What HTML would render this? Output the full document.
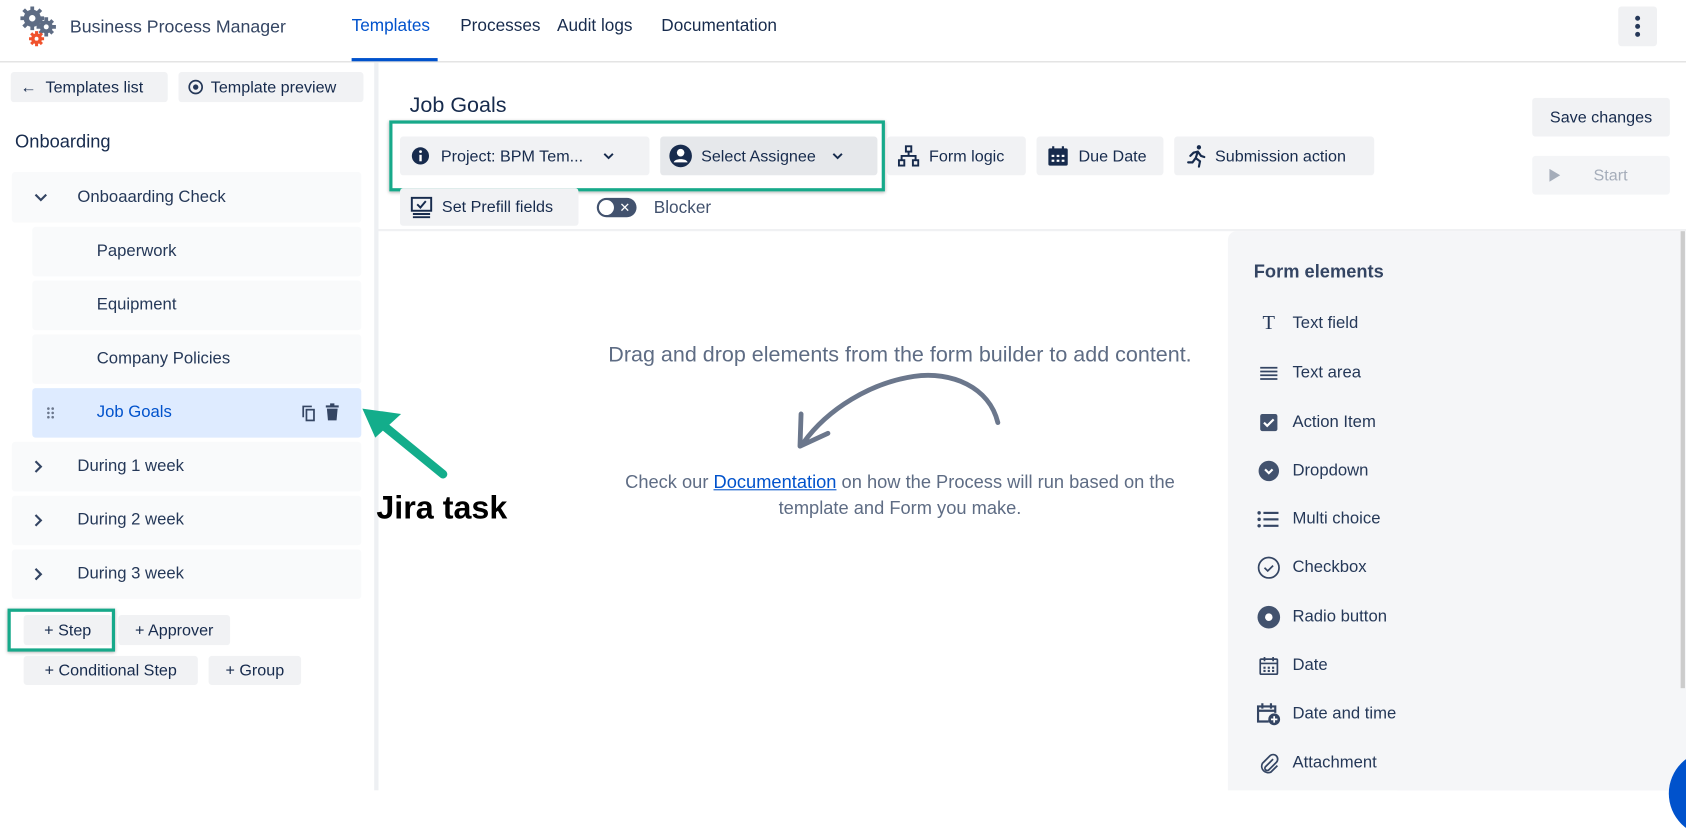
<!DOCTYPE html>
<html><head><meta charset="utf-8"><style>
html,body{margin:0;padding:0;width:1686px;height:790px;overflow:hidden;background:#fff}
#w{position:absolute;left:0;top:0;width:1568px;height:735px;transform:scale(1.07526);transform-origin:0 0;font-family:"Liberation Sans",sans-serif;color:#172b4d}
.a{position:absolute}
.btn{position:absolute;background:#f1f2f4;border-radius:3px;font-size:15px;color:#172b4d;display:flex;align-items:center;box-sizing:border-box;white-space:nowrap}
.row{position:absolute;background:#f9fafb;border-radius:3px;font-size:15.5px;color:#253858;display:flex;align-items:center}
.fe{position:absolute;left:1166px;font-size:15.5px;color:#253858;display:flex;align-items:center;height:24px}
.fe .ic{width:28px;display:flex;justify-content:center;margin-right:8px}
</style></head><body><div id="w">
<!-- header -->
<div class="a" style="left:0;top:57px;width:1568px;height:1px;background:#d9d9d9"></div>
<svg class="a" style="left:18px;top:5px" width="40" height="40" viewBox="0 0 40 40">
<g fill="#5e6c84"><circle cx="12" cy="12" r="8"/><circle cx="25" cy="20" r="6"/></g>
<g stroke="#5e6c84" stroke-width="3.5"><path d="M12 1v22M1 12h22M4 4l16 16M20 4L4 20"/><path d="M25 11v18M16 20h18M19 14l12 12M31 14L19 26"/></g>
<circle cx="12" cy="12" r="3" fill="#fff"/><circle cx="25" cy="20" r="2.3" fill="#fff"/>
<g fill="#f0522d"><circle cx="16" cy="31" r="5"/></g><g stroke="#f0522d" stroke-width="2.8"><path d="M16 24v14M9 31h14M11 26l10 10M21 26l-10 10"/></g><circle cx="16" cy="31" r="1.8" fill="#fff"/>
</svg>
<div class="a" style="left:65px;top:16px;font-size:16.5px;color:#344563">Business Process Manager</div>
<div class="a" style="left:327px;top:16px;font-size:16px;color:#0052cc">Templates</div>
<div class="a" style="left:327px;top:54px;width:80px;height:3px;background:#0052cc"></div>
<div class="a" style="left:428px;top:16px;font-size:16px;color:#172b4d">Processes</div>
<div class="a" style="left:518px;top:16px;font-size:16px;color:#172b4d">Audit logs</div>
<div class="a" style="left:615px;top:16px;font-size:16px;color:#172b4d">Documentation</div>
<div class="a" style="left:1505px;top:6px;width:36px;height:37px;background:#f0f1f3;border-radius:3px"><svg width="36" height="37"><g fill="#253858"><circle cx="18" cy="11" r="2.3"/><circle cx="18" cy="18.5" r="2.3"/><circle cx="18" cy="26" r="2.3"/></g></svg></div>
<!-- sidebar -->
<div class="a" style="left:348px;top:58px;width:4px;height:677px;background:#eef0f3"></div>
<div class="btn" style="left:10px;top:67px;width:146px;height:28px;padding-left:9px">← &nbsp;Templates list</div>
<div class="btn" style="left:166px;top:67px;width:172px;height:28px;padding-left:8px"><svg width="16" height="16" style="margin-right:6px"><circle cx="8" cy="8" r="6" fill="none" stroke="#253858" stroke-width="1.6"/><circle cx="8" cy="8" r="2.5" fill="#253858"/></svg>Template preview</div>
<div class="a" style="left:14px;top:122px;font-size:17px;color:#172b4d">Onboarding</div>
<div class="row" style="left:11px;top:160px;width:325px;height:47px"><svg style="margin-left:20px" width="14" height="10"><path d="M2 2l5 5 5-5" fill="none" stroke="#344563" stroke-width="2"/></svg><span style="margin-left:27px">Onboaarding Check</span></div>
<div class="row" style="left:30px;top:211px;width:306px;height:46px"><span style="margin-left:60px">Paperwork</span></div>
<div class="row" style="left:30px;top:261px;width:306px;height:46px"><span style="margin-left:60px">Equipment</span></div>
<div class="row" style="left:30px;top:311px;width:306px;height:46px"><span style="margin-left:60px">Company Policies</span></div>
<div class="row" style="left:30px;top:361px;width:306px;height:46px;background:#deebff;color:#0052cc"><svg style="margin-left:13px" width="8" height="12"><g fill="#6b778c"><circle cx="2" cy="2" r="1.2"/><circle cx="6" cy="2" r="1.2"/><circle cx="2" cy="6" r="1.2"/><circle cx="6" cy="6" r="1.2"/><circle cx="2" cy="10" r="1.2"/><circle cx="6" cy="10" r="1.2"/></g></svg><span style="margin-left:39px">Job Goals</span>
<svg class="a" style="left:249px;top:15px" width="16" height="17"><path d="M3 12V2h8" fill="none" stroke="#344563" stroke-width="1.6"/><rect x="6" y="5" width="7" height="10" fill="none" stroke="#344563" stroke-width="1.6"/></svg>
<svg class="a" style="left:271px;top:14px" width="16" height="17"><path d="M2 3h12M6 1h4" stroke="#344563" stroke-width="2"/><path d="M3 5h10l-1 11H4z" fill="#344563"/></svg></div>
<div class="row" style="left:11px;top:411px;width:325px;height:46px"><svg style="margin-left:20px" width="10" height="14"><path d="M2 2l5 5-5 5" fill="none" stroke="#344563" stroke-width="2"/></svg><span style="margin-left:31px">During 1 week</span></div>
<div class="row" style="left:11px;top:461px;width:325px;height:46px"><svg style="margin-left:20px" width="10" height="14"><path d="M2 2l5 5-5 5" fill="none" stroke="#344563" stroke-width="2"/></svg><span style="margin-left:31px">During 2 week</span></div>
<div class="row" style="left:11px;top:511px;width:325px;height:46px"><svg style="margin-left:20px" width="10" height="14"><path d="M2 2l5 5-5 5" fill="none" stroke="#344563" stroke-width="2"/></svg><span style="margin-left:31px">During 3 week</span></div>
<div class="btn" style="left:22px;top:572px;width:82px;height:28px;justify-content:center">+ Step</div>
<div class="btn" style="left:110px;top:572px;width:104px;height:28px;justify-content:center">+ Approver</div>
<div class="btn" style="left:22px;top:610px;width:162px;height:27px;justify-content:center">+ Conditional Step</div>
<div class="btn" style="left:194px;top:610px;width:86px;height:27px;justify-content:center">+ Group</div>
<div class="a" style="left:7px;top:566px;width:94px;height:34px;border:3px solid #17a98a;box-shadow:0 1px 3px rgba(0,0,0,.3)"></div>
<svg class="a" style="left:330px;top:375px" width="95" height="80"><path d="M82 66L22 17" stroke="#13ad8b" stroke-width="8" stroke-linecap="round"/><path d="M7 5l36 5-24 22z" fill="#13ad8b"/></svg>
<div class="a" style="left:350px;top:456px;font-size:30px;font-weight:bold;color:#000">Jira task</div>
<!-- main -->
<div class="a" style="left:381px;top:87px;font-size:20px;color:#172b4d">Job Goals</div>
<div class="btn" style="left:372px;top:127px;width:232px;height:36px;padding-left:10px"><svg width="18" height="18" style="margin-right:10px"><circle cx="9" cy="9" r="8" fill="#172b4d"/><rect x="8" y="8" width="2.2" height="6" fill="#fff"/><circle cx="9.1" cy="5" r="1.3" fill="#fff"/></svg>Project: BPM Tem...<svg width="12" height="8" style="margin-left:18px"><path d="M2 2l4 4 4-4" fill="none" stroke="#172b4d" stroke-width="1.8"/></svg></div>
<div class="btn" style="left:614px;top:127px;width:202px;height:36px;padding-left:8px;background:#e6e8eb"><svg width="22" height="22" style="margin-right:8px"><circle cx="11" cy="11" r="10.5" fill="#172b4d"/><circle cx="11" cy="8" r="3.5" fill="#fff"/><path d="M4.5 17c1-4 12-4 13 0z" fill="#fff"/></svg>Select Assignee<svg width="12" height="8" style="margin-left:14px"><path d="M2 2l4 4 4-4" fill="none" stroke="#172b4d" stroke-width="1.8"/></svg></div>
<div class="btn" style="left:825px;top:127px;width:129px;height:36px;padding-left:10px"><svg width="20" height="20" style="margin-right:9px" fill="none" stroke="#172b4d" stroke-width="1.8"><rect x="7.5" y="1" width="5" height="5"/><rect x="1" y="14" width="5" height="5"/><rect x="14" y="14" width="5" height="5"/><path d="M10 6v4M3.5 14v-4h13v4"/></svg>Form logic</div>
<div class="btn" style="left:964px;top:127px;width:118px;height:36px;padding-left:10px"><svg width="20" height="20" style="margin-right:9px"><rect x="1" y="3" width="18" height="16" rx="1.5" fill="#172b4d"/><path d="M5.5 1v4M14.5 1v4" stroke="#172b4d" stroke-width="2"/><g fill="#fff"><rect x="4" y="9" width="2.5" height="2"/><rect x="8.7" y="9" width="2.5" height="2"/><rect x="13.4" y="9" width="2.5" height="2"/><rect x="4" y="13.5" width="2.5" height="2"/><rect x="8.7" y="13.5" width="2.5" height="2"/><rect x="13.4" y="13.5" width="2.5" height="2"/></g></svg>Due Date</div>
<div class="btn" style="left:1092px;top:127px;width:186px;height:36px;padding-left:10px"><svg width="20" height="22" style="margin-right:8px" fill="none" stroke="#172b4d" stroke-width="2" stroke-linecap="round"><circle cx="13" cy="3" r="2" fill="#172b4d" stroke="none"/><path d="M8 8l4-1 3 4 3 1M12 7l-2 6 4 3-1 5M10 13l-3 4H3M8 8L5 11"/></svg>Submission action</div>
<div class="a" style="left:362px;top:112px;width:455px;height:60px;border:3px solid #17a98a;box-shadow:0 1px 3px rgba(0,0,0,.3)"></div>
<div class="btn" style="left:372px;top:175px;width:166px;height:35px;padding-left:9px"><svg width="22" height="22" style="margin-right:8px" fill="none" stroke="#172b4d" stroke-width="1.8"><rect x="2" y="2" width="18" height="12"/><path d="M7 8l3 3 5-6M3 17h16M3 20h16"/></svg>Set Prefill fields</div>
<div class="a" style="left:555px;top:184px;width:37px;height:18px;border-radius:9px;background:#42526e"><div class="a" style="left:2px;top:2px;width:14px;height:14px;border-radius:7px;background:#fff"></div><div class="a" style="left:21px;top:0px;font-size:12px;color:#fff;line-height:18px">✕</div></div>
<div class="a" style="left:608px;top:185px;font-size:16px;color:#42526e">Blocker</div>
<div class="btn" style="left:1425px;top:91px;width:128px;height:36px;justify-content:center">Save changes</div>
<div class="btn" style="left:1425px;top:145px;width:128px;height:36px;background:#f4f5f7;color:#a5adba;padding-left:15px"><svg width="12" height="14" style="margin-right:30px"><path d="M1 1l10 6-10 6z" fill="#a5adba"/></svg>Start</div>
<div class="a" style="left:352px;top:213px;width:1216px;height:2px;background:#f0f1f3"></div>
<div class="a" style="left:540px;top:319px;width:594px;text-align:center;font-size:20px;color:#5e6c84;white-space:nowrap">Drag and drop elements from the form builder to add content.</div>
<svg class="a" style="left:735px;top:340px" width="210" height="85"><path d="M193 53C185 20 150 5 115 10 75 16 35 40 12 72" fill="none" stroke="#6b778c" stroke-width="4.5" stroke-linecap="round"/><path d="M10 45L9 75 35 63" fill="none" stroke="#6b778c" stroke-width="4.5" stroke-linecap="round" stroke-linejoin="round"/></svg>
<div class="a" style="left:552px;top:437px;width:570px;text-align:center;font-size:17px;line-height:24px;color:#5e6c84">Check our <span style="color:#0052cc;text-decoration:underline">Documentation</span> on how the Process will run based on the<br>template and Form you make.</div>
<!-- form elements -->
<div class="a" style="left:1142px;top:215px;width:426px;height:520px;background:#f5f6f8;border-top-left-radius:8px"></div>
<div class="a" style="left:1563px;top:215px;width:4px;height:425px;background:#ccc"></div>
<div class="a" style="left:1166px;top:243px;font-size:17px;font-weight:bold;color:#344563">Form elements</div>
<div class="fe" style="top:289px"><span class="ic" style="font-family:'Liberation Serif',serif;font-size:19px">T</span>Text field</div>
<div class="fe" style="top:335px"><span class="ic"><svg width="18" height="14"><path d="M1 2h16M1 5.5h16M1 9h16M1 12.5h16" stroke="#344563" stroke-width="1.6"/></svg></span>Text area</div>
<div class="fe" style="top:381px"><span class="ic"><svg width="18" height="18"><rect x="1" y="1" width="16" height="16" rx="2" fill="#42526e"/><path d="M4.5 9l3 3 6-6" fill="none" stroke="#fff" stroke-width="2"/></svg></span>Action Item</div>
<div class="fe" style="top:426px"><span class="ic"><svg width="20" height="20"><circle cx="10" cy="10" r="9.5" fill="#42526e"/><path d="M6.5 8.5l3.5 3.5 3.5-3.5" fill="none" stroke="#fff" stroke-width="2"/></svg></span>Dropdown</div>
<div class="fe" style="top:471px"><span class="ic"><svg width="22" height="16"><g fill="#344563"><circle cx="2" cy="2" r="1.6"/><circle cx="2" cy="8" r="1.6"/><circle cx="2" cy="14" r="1.6"/><rect x="6" y="1" width="14" height="2"/><rect x="6" y="7" width="14" height="2"/><rect x="6" y="13" width="14" height="2"/></g></svg></span>Multi choice</div>
<div class="fe" style="top:516px"><span class="ic"><svg width="22" height="22"><circle cx="11" cy="11" r="9.5" fill="none" stroke="#344563" stroke-width="1.6"/><path d="M7 11l3 3 5-5" fill="none" stroke="#344563" stroke-width="1.6"/></svg></span>Checkbox</div>
<div class="fe" style="top:562px"><span class="ic"><svg width="22" height="22"><circle cx="11" cy="11" r="10.5" fill="#42526e"/><circle cx="11" cy="11" r="3.5" fill="#fff"/></svg></span>Radio button</div>
<div class="fe" style="top:607px"><span class="ic"><svg width="18" height="18" fill="none" stroke="#344563" stroke-width="1.6"><rect x="1" y="3" width="16" height="14" rx="1"/><path d="M5 1v4M13 1v4M1 7h16"/><g fill="#344563" stroke="none"><rect x="4" y="10" width="2" height="2"/><rect x="8" y="10" width="2" height="2"/><rect x="12" y="10" width="2" height="2"/><rect x="4" y="13" width="2" height="2"/><rect x="8" y="13" width="2" height="2"/><rect x="12" y="13" width="2" height="2"/></g></svg></span>Date</div>
<div class="fe" style="top:652px"><span class="ic"><svg width="24" height="22"><path d="M12 18H2V4h16v6M2 8h16M6 1v5M14 1v5" fill="none" stroke="#344563" stroke-width="2"/><circle cx="17" cy="16" r="5.5" fill="#344563"/><path d="M17 13v6M14 16h6" stroke="#fff" stroke-width="1.6"/></svg></span>Date and time</div>
<div class="fe" style="top:698px"><span class="ic"><svg width="20" height="20"><path d="M14 6l-7 7a2 2 0 0 0 3 3l7-7a4 4 0 0 0-6-6l-7 7a6 6 0 0 0 8 8l6-6" fill="none" stroke="#344563" stroke-width="1.6"/></svg></span>Attachment</div>
<div class="a" style="left:1552px;top:698px;width:80px;height:80px;border-radius:40px;background:#0052cc"></div>
</div></body></html>
